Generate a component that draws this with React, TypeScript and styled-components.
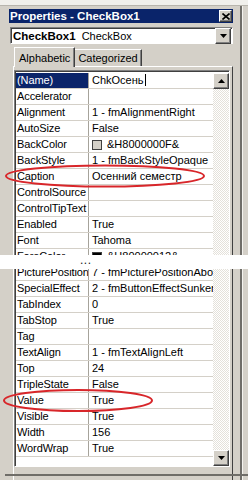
import styled, { createGlobalStyle } from 'styled-components';

const GlobalStyle = createGlobalStyle`
  html, body {
    margin: 0;
    padding: 0;
    background: #ffffff;
  }
  body {
    font-family: "Liberation Sans", Arial, sans-serif;
  }
`;

const FACE = '#d4d0c8';
const NAVY = '#0a246a';

type Prop = { name: string; value: string; swatch?: string; selected?: boolean };

const topRows: Prop[] = [
  { name: '(Name)', value: 'ChkОсень', selected: true },
  { name: 'Accelerator', value: '' },
  { name: 'Alignment', value: '1 - fmAlignmentRight' },
  { name: 'AutoSize', value: 'False' },
  { name: 'BackColor', value: '&H8000000F&', swatch: '#d4d0c8' },
  { name: 'BackStyle', value: '1 - fmBackStyleOpaque' },
  { name: 'Caption', value: 'Осенний семестр' },
  { name: 'ControlSource', value: '' },
  { name: 'ControlTipText', value: '' },
  { name: 'Enabled', value: 'True' },
  { name: 'Font', value: 'Tahoma' },
  { name: 'ForeColor', value: '&H80000012&', swatch: '#000000' },
];

const bottomRows: Prop[] = [
  { name: 'PicturePosition', value: '7 - fmPicturePositionAboveCenter' },
  { name: 'SpecialEffect', value: '2 - fmButtonEffectSunken' },
  { name: 'TabIndex', value: '0' },
  { name: 'TabStop', value: 'True' },
  { name: 'Tag', value: '' },
  { name: 'TextAlign', value: '1 - fmTextAlignLeft' },
  { name: 'Top', value: '24' },
  { name: 'TripleState', value: 'False' },
  { name: 'Value', value: 'True' },
  { name: 'Visible', value: 'True' },
  { name: 'Width', value: '156' },
  { name: 'WordWrap', value: 'True' },
];

const Page = styled.div`
  position: relative;
  width: 248px;
  height: 480px;
  overflow: hidden;
  display: flex;
  flex-direction: column;
  background: #ffffff;
  font-size: 11px;
  color: #000;
`;

const Piece = styled.div<{ $h: number }>`
  height: ${(p) => p.$h}px;
  flex: none;
  overflow: hidden;
  display: flex;
  flex-direction: column;
  background: ${FACE};
`;

const TopStrip = styled.div`
  height: 5px;
  flex: none;
  background: #f1f0ec;
  border-bottom: 1px solid #b8b5ad;
`;

const Frame = styled.div<{ $pt?: number }>`
  flex: 1;
  display: flex;
  flex-direction: column;
  padding: ${(p) => p.$pt ?? 0}px 0 0 9px;
  background: linear-gradient(
    to right,
    ${FACE} 0 240px,
    #6f6d68 240px 242px,
    #f4f3ef 242px 243px,
    ${FACE} 243px
  );
`;

const Column = styled.div`
  width: 224px;
  display: flex;
  flex-direction: column;
  flex: 1;
`;

const TitleBar = styled.div`
  height: 14px;
  flex: none;
  display: flex;
  align-items: center;
  justify-content: space-between;
  background: ${NAVY};
  color: #fff;
  font-weight: bold;
  font-size: 11.5px;
  padding: 0 1px 0 1px;
`;

const RaisedButton = styled.div<{ $w: number; $h: number }>`
  width: ${(p) => p.$w}px;
  height: ${(p) => p.$h}px;
  box-sizing: border-box;
  flex: none;
  display: flex;
  align-items: center;
  justify-content: center;
  background: ${FACE};
  border-top: 1px solid #fff;
  border-left: 1px solid #fff;
  border-right: 1px solid #404040;
  border-bottom: 1px solid #404040;
  box-shadow: inset -1px -1px 0 #808080;
`;

const Combo = styled.div`
  margin: 4px 0 0 1px;
  height: 17px;
  flex: none;
  box-sizing: border-box;
  display: flex;
  align-items: center;
  background: #fff;
  border-top: 1px solid #808080;
  border-left: 1px solid #808080;
  border-right: 1px solid #fff;
  border-bottom: 1px solid #fff;
  box-shadow: inset 1px 1px 0 #404040;
  padding: 0 1px 0 2px;
  font-size: 11.5px;
`;

const ComboText = styled.div`
  flex: 1;
  white-space: nowrap;
`;

const ComboType = styled.span`
  font-size: 11px;
  margin-left: 6px;
`;

const TabRow = styled.div`
  height: 20px;
  flex: none;
  margin-top: 2px;
  display: flex;
  align-items: flex-end;
  padding-left: 5px;
`;

const Tab = styled.div<{ $active?: boolean }>`
  height: ${(p) => (p.$active ? 20 : 17)}px;
  box-sizing: border-box;
  padding: 0 ${(p) => (p.$active ? 4 : 3)}px;
  display: flex;
  align-items: center;
  font-size: 11px;
  background: ${FACE};
  border-top: 1px solid #fff;
  border-left: ${(p) => (p.$active ? '1px solid #fff' : 'none')};
  border-right: 1px solid #404040;
  box-shadow: inset -1px 0 0 #808080;
  margin-bottom: ${(p) => (p.$active ? -1 : 0)}px;
  position: relative;
  z-index: ${(p) => (p.$active ? 1 : 0)};
`;

const Panel = styled.div<{ $cut?: boolean }>`
  margin-left: 4px;
  width: 220px;
  flex: 1;
  box-sizing: border-box;
  border-top: ${(p) => (p.$cut ? 'none' : '1px solid #fff')};
  border-left: 1px solid #fff;
  border-right: 1px solid #404040;
  padding: ${(p) => (p.$cut ? '0' : '3px')} 2px 0 0;
  display: flex;
  flex-direction: column;
`;

const Grid = styled.div<{ $cut?: boolean; $h?: number }>`
  display: flex;
  width: 216px;
  height: ${(p) => (p.$h ? `${p.$h}px` : 'auto')};
  flex: ${(p) => (p.$h ? 'none' : '1')};
  box-sizing: border-box;
  background: #fff;
  border-top: ${(p) => (p.$cut ? 'none' : '1px solid #808080')};
  border-left: 1px solid #808080;
  border-right: 1px solid #fff;
  border-bottom: ${(p) => (p.$cut ? '1px solid #fff' : 'none')};
  box-shadow: inset 1px ${(p) => (p.$cut ? 0 : 1)}px 0 #404040;
  padding: ${(p) => (p.$cut ? 0 : 2)}px 0 0 1px;
`;

const Rows = styled.div<{ $shift?: number }>`
  flex: 1;
  display: flex;
  flex-direction: column;
  margin-top: ${(p) => p.$shift ?? 0}px;
  min-width: 0;
`;

const Row = styled.div`
  height: 16px;
  flex: none;
  box-sizing: border-box;
  display: flex;
  border-bottom: 1px solid #d4d0c8;
`;

const NameCell = styled.div<{ $selected?: boolean }>`
  width: 73px;
  flex: none;
  box-sizing: border-box;
  border-right: 1px solid #a6a39b;
  padding-left: 1px;
  line-height: 15px;
  font-size: 11px;
  letter-spacing: -0.1px;
  white-space: nowrap;
  overflow: hidden;
  background: ${(p) => (p.$selected ? NAVY : 'transparent')};
  color: ${(p) => (p.$selected ? '#fff' : '#000')};
`;

const ValueCell = styled.div`
  flex: 1;
  min-width: 0;
  display: flex;
  align-items: center;
  gap: 5px;
  padding-left: 3px;
  line-height: 15px;
  font-size: 11px;
  white-space: nowrap;
  overflow: hidden;
`;

const Caret = styled.span`
  display: inline-block;
  width: 1px;
  height: 12px;
  background: #000;
  margin-left: 1px;
  vertical-align: -2px;
`;

const Swatch = styled.span<{ $color: string }>`
  width: 10px;
  height: 10px;
  flex: none;
  box-sizing: border-box;
  background: ${(p) => p.$color};
  border: 1px solid #404040;
`;

const Scroll = styled.div`
  width: 16px;
  flex: none;
  display: flex;
  flex-direction: column;
  background: repeating-conic-gradient(#ffffff 0 25%, #e4e1da 0 50%) 0 0 / 2px 2px;
`;

const Track = styled.div`
  flex: 1;
`;

const Gap = styled.div`
  height: 14px;
  flex: none;
  background: #fff;
  padding-left: 80px;
  font-size: 12px;
  line-height: 11px;
  color: #222;
  letter-spacing: 0.5px;
`;

const BottomBase = styled.div`
  height: 7px;
  flex: none;
  border-bottom: 2px solid #6f6d68;
  margin-left: -9px;
  width: 248px;
`;

const Annotation = styled.svg`
  position: absolute;
  left: 0;
  top: 0;
  pointer-events: none;
`;

function Arrow({ up }: { up?: boolean }) {
  return (
    <RaisedButton $w={16} $h={16}>
      <svg width="7" height="4" viewBox="0 0 7 4">
        {up ? <path d="M3.5 0 L7 4 L0 4 Z" fill="#000" /> : <path d="M0 0 L7 0 L3.5 4 Z" fill="#000" />}
      </svg>
    </RaisedButton>
  );
}

function PropertyRows({ rows }: { rows: Prop[] }) {
  return (
    <>
      {rows.map((r) => (
        <Row key={r.name}>
          <NameCell $selected={r.selected}>{r.name}</NameCell>
          <ValueCell>
            {r.swatch && <Swatch $color={r.swatch} />}
            <span>
              {r.value}
              {r.selected && <Caret />}
            </span>
          </ValueCell>
        </Row>
      ))}
    </>
  );
}

export default function App() {
  return (
    <>
      <GlobalStyle />
      <Page>
        <Piece $h={255}>
          <TopStrip />
          <Frame $pt={3}>
            <Column>
              <TitleBar>
                <span>Properties - CheckBox1</span>
                <RaisedButton $w={13} $h={12}>
                  <svg width="8" height="7" viewBox="0 0 8 7">
                    <path d="M0.5 0.5 L7.5 6.5 M7.5 0.5 L0.5 6.5" stroke="#000" strokeWidth="1.6" />
                  </svg>
                </RaisedButton>
              </TitleBar>
              <Combo>
                <ComboText>
                  <b>CheckBox1</b>
                  <ComboType>CheckBox</ComboType>
                </ComboText>
                <Arrow />
              </Combo>
              <TabRow>
                <Tab $active>Alphabetic</Tab>
                <Tab>Categorized</Tab>
              </TabRow>
              <Panel>
                <Grid>
                  <Rows>
                    <PropertyRows rows={topRows} />
                  </Rows>
                  <Scroll>
                    <Arrow up />
                    <Track />
                  </Scroll>
                </Grid>
              </Panel>
            </Column>
          </Frame>
        </Piece>
        <Gap>...</Gap>
        <Piece $h={211}>
          <Frame>
            <Column>
              <Panel $cut>
                <Grid $cut $h={198}>
                  <Rows $shift={-4}>
                    <PropertyRows rows={bottomRows} />
                  </Rows>
                  <Scroll>
                    <Track />
                    <Arrow />
                  </Scroll>
                </Grid>
                <BottomBase />
              </Panel>
            </Column>
          </Frame>
        </Piece>
        <Annotation width="248" height="480" viewBox="0 0 248 480">
          <ellipse cx="105" cy="176" rx="99" ry="10.5" fill="none" stroke="#d8262a" strokeWidth="2" />
          <ellipse cx="78" cy="400.5" rx="74" ry="10.5" fill="none" stroke="#d8262a" strokeWidth="2" />
        </Annotation>
      </Page>
    </>
  );
}
